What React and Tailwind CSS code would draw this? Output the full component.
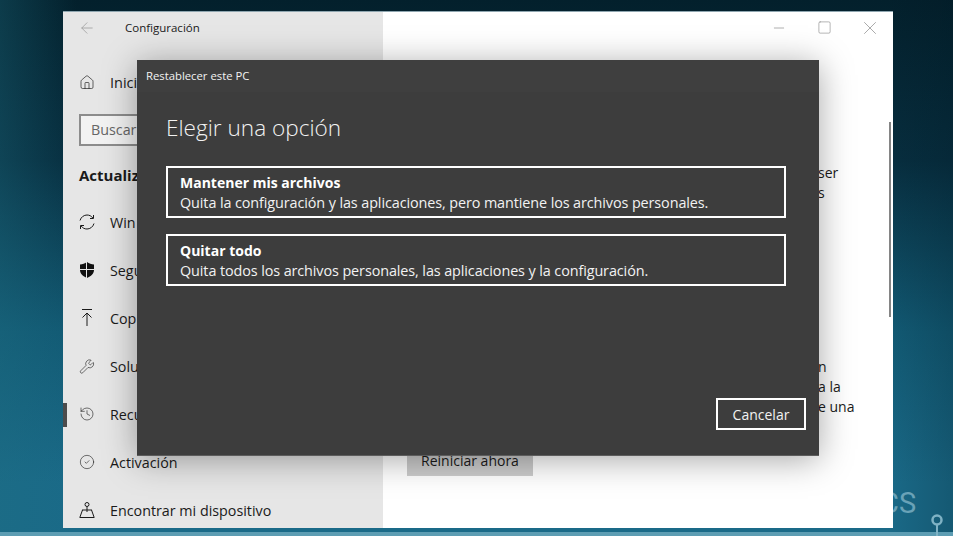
import React from "react";
import { Home, Wrench, History, CircleCheck, ArrowLeft, Minus, Square, X } from "lucide-react";

const font = { fontFamily: '"Open Sans", "Noto Sans", sans-serif' };

const RefreshIcon = () => (
  <svg width="16" height="16" viewBox="0 0 16 16" fill="none" stroke="#1a1a1a" strokeWidth="1">
    <path d="M1 6.500C2 3 5 1 8 1c2.400 0 4.400 1 5.800 3" />
    <path d="M14.500 1v3.500H11" />
    <path d="M15 9.500C14 13 11 15 8 15c-2.400 0-4.400-1-5.800-3" />
    <path d="M1.500 15v-3.500H5" />
  </svg>
);
const ShieldIcon = () => (
  <svg width="16" height="16" viewBox="0 0 16 16">
    <path d="M8 0C6 1.600 3.500 2.400 1 2.500V8c0 3.500 3 6.500 7 8 4-1.500 7-4.500 7-8V2.500C12.500 2.400 10 1.600 8 0z" fill="#111" />
    <path d="M7.500 0v16M1 7.500h14" stroke="#e6e6e6" strokeWidth="1" />
  </svg>
);
const BackupIcon = () => (
  <svg width="16" height="18" viewBox="0 0 16 18" fill="none" stroke="#1a1a1a" strokeWidth="1">
    <path d="M3 .5h10M8 17V4M3.500 8.500 8 4l4.500 4.500" />
  </svg>
);
const FindIcon = () => (
  <svg width="16" height="16" viewBox="0 0 16 16" fill="none" stroke="#1a1a1a" strokeWidth="1">
    <circle cx="8" cy="2.500" r="2" />
    <path d="M8 4.500V10M3 8h10M3.500 8 .8 15.500h14.400L12.500 8" />
  </svg>
);

const items = [
  { icon: <RefreshIcon />, label: "Win" },
  { icon: <ShieldIcon />, label: "Segu" },
  { icon: <BackupIcon />, label: "Cop" },
  { icon: <Wrench size={19} strokeWidth={0.9} color="#1a1a1a" />, label: "Solu" },
  { icon: <History size={20} strokeWidth={0.9} color="#1a1a1a" />, label: "Recu" },
  { icon: <CircleCheck size={20} strokeWidth={0.9} color="#1a1a1a" />, label: "Activación" },
  { icon: <FindIcon />, label: "Encontrar mi dispositivo" },
];

function Option({ title, text }) {
  return (
    <div className="h-[52px] w-[620px] border-2 border-white px-3 pt-[1px] flex flex-col justify-center text-white">
      <div className="text-[14px] leading-[20px] font-bold">{title}</div>
      <div className="text-[14.400px] leading-[20px] tracking-[-0.1px] text-[#f2f2f2]">{text}</div>
    </div>
  );
}

export default function App() {
  return (
    <div
      style={font}
      className="relative w-[953px] h-[536px] overflow-hidden pt-[11px] pl-[63px] bg-[linear-gradient(180deg,#03202c_0%,#072e3f_30%,#125a74_62%,#1a6a88_90%)]"
    >
      <div className="absolute inset-0 bg-[linear-gradient(90deg,rgba(30,110,130,0.35)_0%,rgba(0,0,0,0)_8%,rgba(0,0,0,0)_93%,rgba(0,20,30,0.2)_100%)]" />
      <div className="absolute left-0 right-0 bottom-0 h-[4px] bg-[#5d9db3]" />
      <div className="absolute left-[880px] top-[483px] text-[29px] leading-[40px] text-[#6aa2b7]" style={{ fontFamily: "Roboto, sans-serif" }}>
        CS
      </div>
      <svg className="absolute left-[929px] top-[512px]" width="16" height="24" viewBox="0 0 16 24" fill="none" stroke="#7fb2c4">
        <circle cx="8" cy="8" r="4.500" strokeWidth="2.500" />
        <path d="M8 13v11" strokeWidth="2" />
      </svg>

      <div className="relative flex w-[830px] h-[517px] bg-white border-t border-t-[#8fa6b0]">
        <aside className="relative w-[320px] h-full bg-[#e6e6e6] overflow-hidden shrink-0 px-4 text-[#1a1a1a]">
          <div className="h-[31px] flex items-center">
            <ArrowLeft size={18} strokeWidth={1} color="#9a9a9a" className="ml-[-1px]" />
            <span className="ml-[29px] text-[11.500px] text-[#1a1a1a]">Configuración</span>
          </div>
          <div className="h-[48px] mt-[15px] flex items-center">
            <span className="w-[16px] flex justify-center">
              <Home size={19} strokeWidth={1} color="#1a1a1a" />
            </span>
            <span className="ml-[15px] mt-[2px] text-[14.500px]">Inici</span>
          </div>
          <div className="mt-[8px] h-[32px] w-[288px] border-2 border-[#8c8c8c] bg-[#f2f2f2] px-[10px] flex items-center text-[14.300px] text-[#666]">
            Buscar
          </div>
          <div className="mt-[18px] h-[22px] leading-[22px] text-[15px] font-bold whitespace-nowrap">Actualiza</div>
          <div className="mt-[12px]">
            {items.map((it) => (
              <div key={it.label} className="h-[48px] flex items-center">
                <span className="w-[16px] flex justify-center">{it.icon}</span>
                <span className="ml-[15px] mt-[2px] text-[14.300px] whitespace-nowrap">{it.label}</span>
              </div>
            ))}
          </div>
          <div className="absolute left-0 top-[391px] w-[4px] h-[24px] bg-[#4c4c4c]" />
        </aside>

        <main className="relative flex-1 pl-[435px] text-[14px] leading-[20px] text-[#1a1a1a]">
          <div className="pt-[151px]">
            <div>ser</div>
            <div>s</div>
          </div>
          <div className="mt-[154px]">
            <div>n</div>
            <div>a la</div>
            <div>e una</div>
          </div>
          <div className="absolute left-[24px] top-[434px] w-[126px] h-[30px] bg-[#cccccc] flex items-center justify-center text-[14px] text-[#1a1a1a]">
            Reiniciar ahora
          </div>
          <div className="absolute right-[2px] top-[110px] w-[2px] h-[195px] bg-[#858585]" />
          <div className="absolute right-0 top-0 h-[31px] flex items-center text-[#8a8a8a]">
            <Minus size={16} strokeWidth={1} className="mr-[30px]" />
            <Square size={15} strokeWidth={1} className="mr-[27px]" />
            <X size={22} strokeWidth={0.8} className="mr-[12px]" />
          </div>
        </main>
      </div>

      <div className="absolute left-[137px] top-[60px] w-[682px] h-[396px] flex flex-col bg-[#3d3d3d] border-b border-b-[#5c5c5c] shadow-[0_4px_32px_rgba(0,0,0,0.35)]">
        <div className="h-[32px] pl-[9px] flex items-center text-[11.300px] text-[#f2f2f2] bg-[#3f3f3f]">Restablecer este PC</div>
        <div className="pl-[29px] flex-1 flex flex-col">
          <h1 className="mt-[18px] text-[22.600px] leading-[36px] font-light text-[#f2f2f2]">Elegir una opción</h1>
          <div className="mt-[20px] flex flex-col gap-4">
            <Option title="Mantener mis archivos" text="Quita la configuración y las aplicaciones, pero mantiene los archivos personales." />
            <Option title="Quitar todo" text="Quita todos los archivos personales, las aplicaciones y la configuración." />
          </div>
        </div>
        <div className="flex justify-end pr-[13px] pb-[25px]">
          <div className="w-[90px] h-[32px] border-2 border-white flex items-center justify-center text-[14px] text-[#f2f2f2]">Cancelar</div>
        </div>
      </div>
    </div>
  );
}
